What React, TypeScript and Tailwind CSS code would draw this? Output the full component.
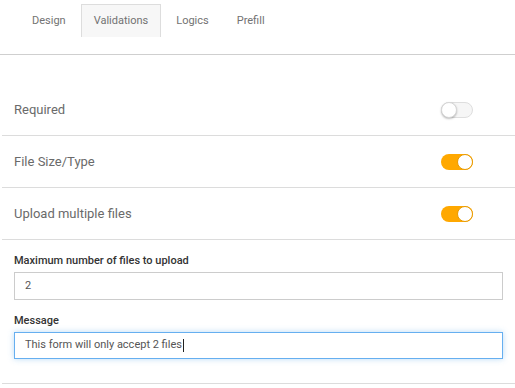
import { useState } from 'react';

const tabs = ['Design', 'Validations', 'Logics', 'Prefill'];

function Toggle({ on }: { on: boolean }) {
    return (
        <span
            className={
                on
                    ? 'relative inline-flex h-[16px] w-[32px] items-center rounded-full bg-[#ffa800]'
                    : 'relative inline-flex h-[16px] w-[32px] items-center rounded-full border border-[#dedede] bg-[#f6f6f6]'
            }
        >
            <span
                className={
                    on
                        ? 'absolute right-[0px] h-[16px] w-[16px] rounded-full border border-[#e89a00] bg-white'
                        : 'absolute left-[-1px] h-[16px] w-[16px] rounded-full border border-[#d6d6d6] bg-white shadow-[0_1px_2px_rgba(0,0,0,0.25)]'
                }
            />
        </span>
    );
}

function SettingRow({ label, on }: { label: string; on: boolean }) {
    return (
        <div className="flex h-[52px] items-center justify-between border-b border-[#dcdcdc] pl-[12px] pr-[42px]">
            <span className="text-[13px] text-[#6a6a6a]">{label}</span>
            <Toggle on={on} />
        </div>
    );
}

export default function App() {
    const [active] = useState('Validations');

    return (
        <div className="h-[388px] w-[515px] bg-white" style={{ fontFamily: 'Roboto, "Noto Sans", sans-serif' }}>
            <div className="h-[55px] border-b border-[#cfcfcf] pt-[4px]">
                <div className="ml-[19px] flex gap-[2px]">
                    {tabs.map((t) => (
                        <div
                            key={t}
                            className={
                                t === active
                                    ? 'flex h-[33px] items-center border border-b-0 border-[#dddddd] bg-[#f7f7f7] px-[12px] pt-[1px] text-[11px] text-[#727272]'
                                    : 'flex h-[33px] items-center border border-transparent px-[12px] pt-[1px] text-[11px] text-[#727272]'
                            }
                        >
                            {t}
                        </div>
                    ))}
                </div>
            </div>

            <div className="ml-[2px] pt-[29px]">
                <SettingRow label="Required" on={false} />
                <SettingRow label="File Size/Type" on />
                <SettingRow label="Upload multiple files" on />

                <div className="border-b border-[#dcdcdc] px-[12px] pb-[24px] pt-[13px]">
                    <label className="mb-[4px] block text-[11px] leading-[15px] font-medium text-[#333333]">
                        Maximum number of files to upload
                    </label>
                    <div className="flex h-[28px] items-center border border-[#cccccc] bg-white px-[10px] text-[11px] text-[#555555]">
                        2
                    </div>

                    <label className="mb-[4px] mt-[13px] block text-[11px] leading-[15px] font-medium text-[#333333]">
                        Message
                    </label>
                    <div className="flex h-[27px] items-center border border-[#66aff0] bg-white px-[10px] text-[11px] text-[#555555] shadow-[0_0_6px_rgba(102,175,233,0.45)]">
                        This form will only accept 2 files
                        <span className="ml-[1px] inline-block h-[13px] w-[1px] bg-[#222222]" />
                    </div>
                </div>
            </div>
        </div>
    );
}
